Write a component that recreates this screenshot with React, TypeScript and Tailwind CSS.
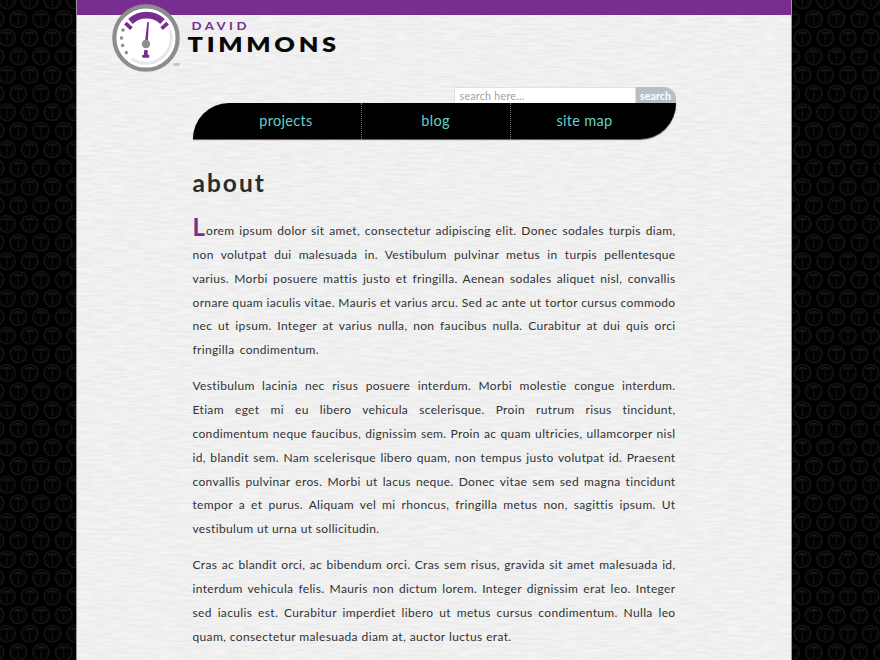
const paragraphs: { text: string; last?: string }[][] = [
  [
    { text: 'orem ipsum dolor sit amet, consectetur adipiscing elit. Donec sodales turpis diam,' },
    { text: 'non volutpat dui malesuada in. Vestibulum pulvinar metus in turpis pellentesque' },
    { text: 'varius. Morbi posuere mattis justo et fringilla. Aenean sodales aliquet nisl, convallis' },
    { text: 'ornare quam iaculis vitae. Mauris et varius arcu. Sed ac ante ut tortor cursus commodo' },
    { text: 'nec ut ipsum. Integer at varius nulla, non faucibus nulla. Curabitur at dui quis orci' },
    { text: 'fringilla condimentum.', last: 'w-[126.5px]' },
  ],
  [
    { text: 'Vestibulum lacinia nec risus posuere interdum. Morbi molestie congue interdum.' },
    { text: 'Etiam eget mi eu libero vehicula scelerisque. Proin rutrum risus tincidunt,' },
    { text: 'condimentum neque faucibus, dignissim sem. Proin ac quam ultricies, ullamcorper nisl' },
    { text: 'id, blandit sem. Nam scelerisque libero quam, non tempus justo volutpat id. Praesent' },
    { text: 'convallis pulvinar eros. Morbi ut lacus neque. Donec vitae sem sed magna tincidunt' },
    { text: 'tempor a et purus. Aliquam vel mi rhoncus, fringilla metus non, sagittis ipsum. Ut' },
    { text: 'vestibulum ut urna ut sollicitudin.', last: 'w-[187px]' },
  ],
  [
    { text: 'Cras ac blandit orci, ac bibendum orci. Cras sem risus, gravida sit amet malesuada id,' },
    { text: 'interdum vehicula felis. Mauris non dictum lorem. Integer dignissim erat leo. Integer' },
    { text: 'sed iaculis est. Curabitur imperdiet libero ut metus cursus condimentum. Nulla leo' },
    { text: 'quam, consectetur malesuada diam at, auctor luctus erat.', last: 'w-[319px]' },
  ],
];

function Dial() {
  return (
    <g fill="none" stroke="#1a1a1a">
      <circle r="8.2" strokeWidth="1.4" />
      <path d="M-4.2 -3.4A5.5 5.5 0 0 1 4.2 -3.4" strokeWidth="1.7" />
      <path d="M0 -4.5V1M0 3V5.4M-1.2 5.3H1.2M-5.4 -1.2v1M-5.3 1.4v1M-4 4h.8" strokeWidth="0.8" />
      <circle cy="1.6" r="0.8" strokeWidth="0.7" />
      <path d="M5.4 -1A5.5 5.5 0 0 1 2.5 4.9" stroke="#111" strokeWidth="0.8" />
    </g>
  );
}

function GaugeWallpaper() {
  return (
    <svg className="absolute inset-0 h-full w-full" aria-hidden="true">
      <defs>
        <pattern id="dials" width="22.73" height="37.25" patternUnits="userSpaceOnUse" x="6.95" y="0.4">
          <g transform="translate(11.36 18.63)"><Dial /></g>
        </pattern>
        <pattern id="dials2" width="22.73" height="37.25" patternUnits="userSpaceOnUse" x="-4.4" y="19">
          <g transform="translate(11.36 18.63)"><Dial /></g>
        </pattern>
      </defs>
      <rect width="100%" height="100%" fill="#000" />
      <rect width="100%" height="100%" fill="url(#dials)" />
      <rect width="100%" height="100%" fill="url(#dials2)" />
    </svg>
  );
}

function PaperGrain() {
  return (
    <svg className="absolute inset-0 h-full w-full" aria-hidden="true">
      <filter id="grain" x="0" y="0" width="100%" height="100%" colorInterpolationFilters="sRGB">
        <feTurbulence type="fractalNoise" baseFrequency="0.06 0.42" numOctaves="2" seed="7" />
        <feColorMatrix values="0.075 0 0 0 0.902  0.075 0 0 0 0.902  0.075 0 0 0 0.902  0 0 0 0 1" />
      </filter>
      <rect width="100%" height="100%" filter="url(#grain)" />
    </svg>
  );
}

function Logo() {
  return (
    <svg width="230" height="72" viewBox="110 2 230 72" role="img" aria-label="David Timmons">
      <circle cx="146" cy="38" r="31.7" fill="#fff" stroke="#8b8d8f" strokeWidth="4.2" />
      <path d="M170 30A25.3 25.3 0 0 1 131.5 58.7" fill="none" stroke="#e3e9ee" strokeWidth="3" />
      <path d="M130.5 21.5A23.3 23.3 0 0 1 162.5 21.5" fill="none" stroke="#7a2d91" strokeWidth="6.6" />
      <path d="M125.4 23.1L131.4 28.7M167.6 23.1L161.6 28.7" stroke="#7a2d91" strokeWidth="3.8" />
      <path d="M147.3 22L148.9 22L147.9 40H145.2Z" fill="#7a2d91" />
      <path d="M144.3 50h3.2l.4 5h1.3v2.7h-6.9v-2.7h1.5Z" fill="#7a2d91" />
      <circle cx="146" cy="44" r="4.2" fill="#8b8d8f" />
      <g fill="#8b8d8f">
        <rect x="121.5" y="28.5" width="3" height="3" transform="rotate(25 123 30)" />
        <rect x="120" y="36.5" width="3" height="3" />
        <rect x="121" y="44" width="3" height="3" transform="rotate(-15 122 45)" />
        <rect x="125" y="51.5" width="3" height="3" transform="rotate(-35 126 53)" />
      </g>
      <text transform="translate(191.5 29.7) scale(1.1 1)" className="font-['Lato',sans-serif] text-[12px] font-bold" fill="#7a2d91" textLength="50" lengthAdjust="spacing">DAVID</text>
      <text transform="translate(187.5 51.8) scale(1.18 1)" className="font-['Lato',sans-serif] text-[21.5px] font-extrabold" fill="#090909" textLength="126" lengthAdjust="spacing">TIMMONS</text>
      <text x="173.5" y="66" className="font-['Lato',sans-serif] text-[4px]" fill="#777" textLength="6">SM</text>
    </svg>
  );
}

export default function App() {
  return (
    <div className="relative h-[660px] w-[880px] overflow-hidden bg-black font-['Lato',sans-serif]">
      <GaugeWallpaper />
      <div className="relative ml-[76px] h-full w-[716px] border-x border-[#999] bg-[#efefef]">
        <PaperGrain />
        <div className="relative flex flex-col">
          <div className="h-[15px] bg-[#7a2d91]" />
          <header className="-mt-[13px] ml-[33px] h-[72px]">
            <Logo />
          </header>
          <main className="ml-[115.5px] w-[483px]">
            <form className="mt-[13px] flex h-[16px] justify-end">
              <div className="w-[182px] overflow-hidden border border-b-0 border-[#e1e1e1] bg-white pl-[5px] text-[10.7px] leading-[15px] tracking-[0.25px] text-[#a0a0a0]">search here...</div>
              <button type="button" className="w-[40px] rounded-tr-[12px] bg-[#b7bfc5] text-center text-[10.7px] leading-[17px] font-bold text-white">search</button>
            </form>
            <nav className="flex h-[36px] rounded-tl-[36px] rounded-br-[36px] bg-black pr-[17px] pl-[19px] text-[14.5px] leading-[36px] tracking-[0.3px] text-[#65cfc8] shadow-[0_1px_1px_#555]">
              <a className="w-[150px] border-r border-dotted border-[#777] text-center">projects</a>
              <a className="w-[149px] border-r border-dotted border-[#777] text-center">blog</a>
              <a className="w-[148px] text-center">site map</a>
            </nav>
            <h1 className="mt-[25px] h-[37px] text-[24.5px] leading-[37px] font-bold tracking-[2px] text-[#292d2f]">about</h1>
            <article className="mt-[18px] text-[12px] leading-[23.87px] tracking-[0.34px] text-[#303234] [word-spacing:-1.2px]">
              {paragraphs.map((lines, p) => (
                <p key={p} className="mb-[11.93px]">
                  {lines.map((line, i) => (
                    <span key={i} className={`flex h-[23.87px] ${line.last ?? 'w-full'}`}>
                      {p === 0 && i === 0 && <b className="w-[13.5px] text-[24px] leading-[16px] text-[#7a2d91]">L</b>}
                      <span className="min-w-0 flex-1 text-justify whitespace-normal [text-align-last:justify]">{line.text}</span>
                    </span>
                  ))}
                </p>
              ))}
            </article>
          </main>
        </div>
      </div>
    </div>
  );
}
